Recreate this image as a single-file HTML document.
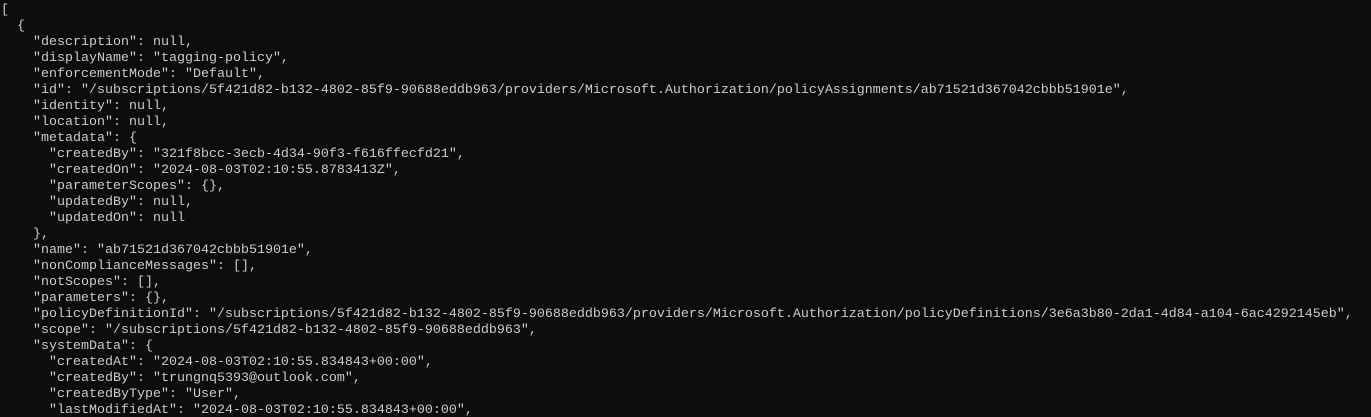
<!DOCTYPE html>
<html><head><meta charset="utf-8"><style>
html,body{margin:0;padding:0;background:#0c0c0c;width:1371px;height:417px;overflow:hidden}
pre{margin:0;padding:3px 0 0 1px;font-family:"Liberation Mono",monospace;font-size:13.33px;line-height:16px;color:#cccccc;white-space:pre}
</style></head><body><pre>[
  {
    "description": null,
    "displayName": "tagging-policy",
    "enforcementMode": "Default",
    "id": "/subscriptions/5f421d82-b132-4802-85f9-90688eddb963/providers/Microsoft.Authorization/policyAssignments/ab71521d367042cbbb51901e",
    "identity": null,
    "location": null,
    "metadata": {
      "createdBy": "321f8bcc-3ecb-4d34-90f3-f616ffecfd21",
      "createdOn": "2024-08-03T02:10:55.8783413Z",
      "parameterScopes": {},
      "updatedBy": null,
      "updatedOn": null
    },
    "name": "ab71521d367042cbbb51901e",
    "nonComplianceMessages": [],
    "notScopes": [],
    "parameters": {},
    "policyDefinitionId": "/subscriptions/5f421d82-b132-4802-85f9-90688eddb963/providers/Microsoft.Authorization/policyDefinitions/3e6a3b80-2da1-4d84-a104-6ac4292145eb",
    "scope": "/subscriptions/5f421d82-b132-4802-85f9-90688eddb963",
    "systemData": {
      "createdAt": "2024-08-03T02:10:55.834843+00:00",
      "createdBy": "trungnq5393@outlook.com",
      "createdByType": "User",
      "lastModifiedAt": "2024-08-03T02:10:55.834843+00:00",
</pre></body></html>
